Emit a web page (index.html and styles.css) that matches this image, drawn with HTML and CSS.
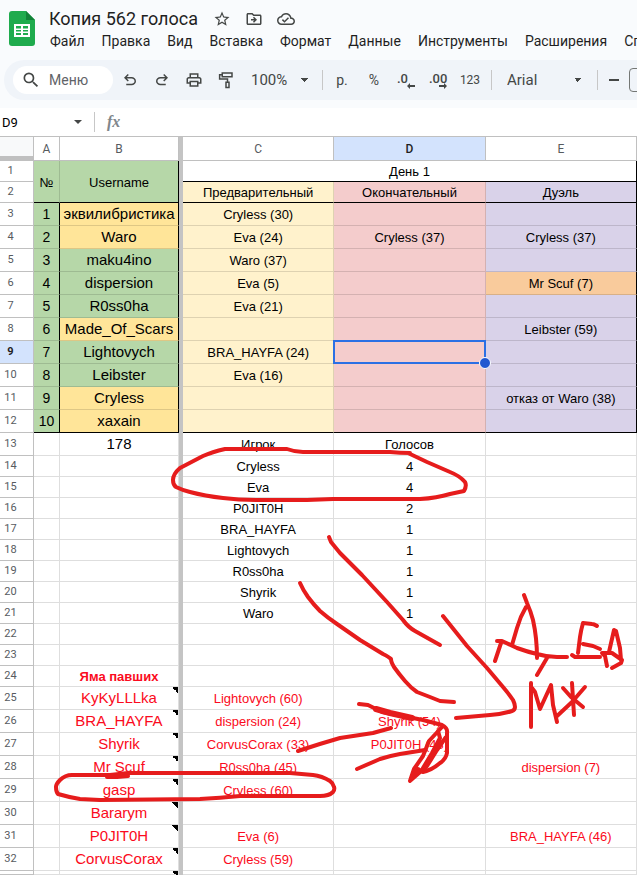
FILE: index.html
```html
<!DOCTYPE html>
<html lang="ru">
<head>
<meta charset="utf-8">
<meta name="viewport" content="width=device-width, initial-scale=1">
<title>Копия 562 голоса</title>
<link rel="stylesheet" href="styles.css">
</head>
<body>
<div class="app">
<header class="top">
  <div class="brand">
    <svg class="logo" viewBox="0 0 26 35" aria-hidden="true"><path fill="#1fab4d" d="M3 0h14l9 9v23a3 3 0 0 1-3 3H3a3 3 0 0 1-3-3V3a3 3 0 0 1 3-3z"/><path fill="#128238" d="M17 0l9 9h-9z"/><path fill="#fff" fill-rule="evenodd" d="M5 13h16v13H5zm2 2v2.500h5V15zm7 0v2.500h5V15zm-7 4v1.500h5V19zm7 0v1.500h5V19zm-7 3v2h5v-2zm7 0v2h5v-2z"/></svg>
    <div class="heading">
      <div class="title-row">
        <input class="doc-title" aria-label="Название документа" value="Копия 562 голоса">
        <button class="icon-btn" aria-label="Пометить"><svg viewBox="0 0 24 24"><path d="M22 9.240l-7.190-.620L12 2 9.190 8.630 2 9.240l5.460 4.730L5.820 21 12 17.270 18.180 21l-1.630-7.030L22 9.240zM12 15.400l-3.760 2.270 1-4.280-3.320-2.880 4.380-.380L12 6.100l1.710 4.040 4.380.380-3.320 2.880 1 4.280L12 15.400z"/></svg></button>
        <button class="icon-btn" aria-label="Переместить"><svg viewBox="0 0 24 24"><path d="M20 6h-8l-2-2H4c-1.100 0-2 .9-2 2v12c0 1.100.9 2 2 2h16c1.100 0 2-.9 2-2V8c0-1.100-.9-2-2-2zm0 12H4V6h5.170l2 2H20v10z"/><path d="M12 17l4-4-4-4-1.400 1.400 1.600 1.600H8v2h4.200l-1.600 1.600z"/></svg></button>
        <button class="icon-btn" aria-label="Состояние документа"><svg viewBox="0 0 24 24"><path d="M19.350 10.040C18.670 6.590 15.640 4 12 4 9.110 4 6.600 5.640 5.350 8.040 2.340 8.360 0 10.910 0 14c0 3.310 2.690 6 6 6h13c2.760 0 5-2.240 5-5 0-2.640-2.050-4.780-4.650-4.960zM19 18H6c-2.210 0-4-1.790-4-4 0-2.050 1.530-3.760 3.560-3.970l1.070-.110.500-.950C8.080 7.140 9.940 6 12 6c2.620 0 4.880 1.860 5.390 4.430l.300 1.500 1.530.110c1.560.100 2.780 1.410 2.780 2.960 0 1.650-1.350 3-3 3zm-9-3.820l-2.090-2.090L6.500 13.500 10 17l6.010-6.010-1.410-1.410z"/></svg></button>
      </div>
      <nav class="menu">
        <button>Файл</button><button>Правка</button><button>Вид</button><button>Вставка</button><button>Формат</button><button>Данные</button><button>Инструменты</button><button>Расширения</button><button>Справка</button>
      </nav>
    </div>
  </div>
  <div class="toolbar">
    <label class="search"><svg viewBox="0 0 24 24" aria-hidden="true"><path d="M15.500 14h-.790l-.280-.270A6.471 6.471 0 0 0 16 9.500 6.500 6.500 0 1 0 9.500 16c1.610 0 3.090-.590 4.230-1.570l.270.280v.790l5 4.990L20.490 19l-4.990-5zm-6 0C7.010 14 5 11.990 5 9.500S7.010 5 9.500 5 14 7.010 14 9.500 11.990 14 9.500 14z"/></svg><input type="text" aria-label="Поиск по меню" placeholder="Меню"></label>
    <div class="tools">
      <button class="tool" aria-label="Отменить"><svg viewBox="0 0 24 24"><path d="M7 19v-2h7.100q1.575 0 2.738-1T18 13.500 16.838 11 14.100 10H7.800l2.600 2.600L9 14 4 9l5-5 1.400 1.400L7.800 8h6.300q2.425 0 4.163 1.575T20 13.500t-1.738 3.925T14.100 19z"/></svg></button>
      <button class="tool" aria-label="Повторить"><svg viewBox="0 0 24 24"><path transform="matrix(-1 0 0 1 24 0)" d="M7 19v-2h7.100q1.575 0 2.738-1T18 13.500 16.838 11 14.100 10H7.800l2.600 2.600L9 14 4 9l5-5 1.400 1.400L7.800 8h6.300q2.425 0 4.163 1.575T20 13.500t-1.738 3.925T14.100 19z"/></svg></button>
      <button class="tool" aria-label="Печать"><svg viewBox="0 0 24 24"><path d="M19 8h-1V3H6v5H5c-1.660 0-3 1.340-3 3v6h4v4h12v-4h4v-6c0-1.660-1.340-3-3-3zM8 5h8v3H8V5zm8 12v2H8v-4h8v2zm2-2v-2H6v2H4v-4c0-.550.450-1 1-1h14c.550 0 1 .450 1 1v4h-2z"/></svg></button>
      <button class="tool" aria-label="Копировать форматирование"><svg viewBox="0 0 24 24"><path fill="none" stroke="#444746" stroke-width="2" d="M7 2.500h13v5H7zM7 5H3.500v5.500H14V15M12 15h4v7h-4z"/></svg></button>
    </div>
    <select class="zoom" aria-label="Масштаб"><option>100%</option></select>
    <span class="rule"></span>
    <div class="formats">
      <button>р.</button>
      <button>%</button>
      <button class="dec" aria-label="Уменьшить число знаков">.0<svg viewBox="0 0 8 6"><path d="M3 0v2h5v2H3v2L0 3z"/></svg></button>
      <button class="dec" aria-label="Увеличить число знаков">.00<svg viewBox="0 0 8 6"><path d="M5 0v2H0v2h5v2l3-3z"/></svg></button>
      <button class="small">123</button>
    </div>
    <span class="rule"></span>
    <select class="font" aria-label="Шрифт"><option>Arial</option></select>
    <span class="rule"></span>
    <button class="minus" aria-label="Уменьшить размер шрифта"></button>
    <input class="size" aria-label="Размер шрифта" value="">
  </div>
</header>
<div class="formula">
  <input class="name-box" aria-label="Поле имени" value="D9">
  <svg class="caret" viewBox="0 0 8 4" aria-hidden="true"><path d="M0 0h8L4 4z"/></svg>
  <span class="rule"></span>
  <label class="fx" for="fx">fx</label>
  <input class="fx-input" id="fx">
</div>
<table class="sheet">
  <colgroup><col class="c-head"><col class="c-a"><col class="c-b"><col class="c-freeze"><col><col><col></colgroup>
  <thead>
    <tr><th class="corner" aria-label="Выделить всё"></th><th>A</th><th>B</th><td class="freeze"></td><th>C</th><th class="sel">D</th><th>E</th></tr>
  </thead>
  <tbody class="votes">
    <tr class="short"><th>1</th><td class="g under" rowspan="2">№</td><td class="g edge under" rowspan="2">Username</td><td class="freeze" rowspan="12"></td><td class="under edge" colspan="3">День 1</td></tr>
    <tr class="short"><th>2</th><td class="y under">Предварительный</td><td class="r under">Окончательный</td><td class="p under edge">Дуэль</td></tr>
    <tr><th>3</th><td class="g num edge">1</td><td class="o name edge">эквилибристика</td><td class="y">Cryless (30)</td><td class="r"></td><td class="p edge"></td></tr>
    <tr><th>4</th><td class="g num edge">2</td><td class="o name edge">Waro</td><td class="y">Eva (24)</td><td class="r">Cryless (37)</td><td class="p edge">Cryless (37)</td></tr>
    <tr><th>5</th><td class="g num edge">3</td><td class="g name edge">maku4ino</td><td class="y">Waro (37)</td><td class="r"></td><td class="p edge"></td></tr>
    <tr><th>6</th><td class="g num edge">4</td><td class="g name edge">dispersion</td><td class="y">Eva (5)</td><td class="r"></td><td class="h edge">Mr Scuf (7)</td></tr>
    <tr><th>7</th><td class="g num edge">5</td><td class="g name edge">R0ss0ha</td><td class="y">Eva (21)</td><td class="r"></td><td class="p edge"></td></tr>
    <tr><th>8</th><td class="g num edge">6</td><td class="o name edge">Made_Of_Scars</td><td class="y"></td><td class="r"></td><td class="p edge">Leibster (59)</td></tr>
    <tr><th class="sel">9</th><td class="g num edge">7</td><td class="g name edge">Lightovych</td><td class="y">BRA_HAYFA (24)</td><td class="r active"></td><td class="p edge"></td></tr>
    <tr><th>10</th><td class="g num edge">8</td><td class="g name edge">Leibster</td><td class="y">Eva (16)</td><td class="r"></td><td class="p edge"></td></tr>
    <tr><th>11</th><td class="g num edge">9</td><td class="o name edge">Cryless</td><td class="y"></td><td class="r"></td><td class="p edge">отказ от Waro (38)</td></tr>
    <tr><th>12</th><td class="g num edge under">10</td><td class="o name edge under">xaxain</td><td class="y under"></td><td class="r under"></td><td class="p edge under"></td></tr>
  </tbody>
  <tbody class="totals">
    <tr><th>13</th><td></td><td class="name">178</td><td class="freeze" rowspan="11"></td><td>Игрок</td><td>Голосов</td><td></td></tr>
    <tr class="short"><th>14</th><td></td><td></td><td>Cryless</td><td>4</td><td></td></tr>
    <tr class="short"><th>15</th><td></td><td></td><td>Eva</td><td>4</td><td></td></tr>
    <tr class="short"><th>16</th><td></td><td></td><td>P0JIT0H</td><td>2</td><td></td></tr>
    <tr class="short"><th>17</th><td></td><td></td><td>BRA_HAYFA</td><td>1</td><td></td></tr>
    <tr class="short"><th>18</th><td></td><td></td><td>Lightovych</td><td>1</td><td></td></tr>
    <tr class="short"><th>19</th><td></td><td></td><td>R0ss0ha</td><td>1</td><td></td></tr>
    <tr class="short"><th>20</th><td></td><td></td><td>Shyrik</td><td>1</td><td></td></tr>
    <tr class="short"><th>21</th><td></td><td></td><td>Waro</td><td>1</td><td></td></tr>
    <tr class="short"><th>22</th><td></td><td></td><td></td><td></td><td></td></tr>
    <tr class="short"><th>23</th><td></td><td></td><td></td><td></td><td></td></tr>
  </tbody>
  <tbody class="fallen">
    <tr class="short"><th>24</th><td></td><td class="pit">Яма павших</td><td class="freeze" rowspan="10"></td><td></td><td></td><td></td></tr>
    <tr><th>25</th><td></td><td class="name note">KyKyLLLka</td><td>Lightovych (60)</td><td></td><td></td></tr>
    <tr><th>26</th><td></td><td class="name note">BRA_HAYFA</td><td>dispersion (24)</td><td>Shyrik (54)</td><td></td></tr>
    <tr><th>27</th><td></td><td class="name note">Shyrik</td><td>CorvusCorax (33)</td><td>P0JIT0H (43)</td><td></td></tr>
    <tr><th>28</th><td></td><td class="name note">Mr Scuf</td><td>R0ss0ha (45)</td><td></td><td>dispersion (7)</td></tr>
    <tr><th>29</th><td></td><td class="name note">gasp</td><td>Cryless (60)</td><td></td><td></td></tr>
    <tr><th>30</th><td></td><td class="name note">Bararym</td><td></td><td></td><td></td></tr>
    <tr><th>31</th><td></td><td class="name note">P0JIT0H</td><td>Eva (6)</td><td></td><td>BRA_HAYFA (46)</td></tr>
    <tr><th>32</th><td></td><td class="name note">CorvusCorax</td><td>Cryless (59)</td><td></td><td></td></tr>
    <tr class="cut"><th></th><td></td><td class="note"></td><td></td><td></td><td></td></tr>
  </tbody>
</table>
<svg class="ink" viewBox="0 0 637 875" aria-hidden="true">
  <!-- loop round the two leaders -->
  <path d="M410 453Q400 453 390 452L303 452Q295 452 287 449L225 449Q212 452 203 456L180 468Q173 474 173 480Q173 485 176 487Q182 490 190 492Q205 496 223 498Q240 500 260 500L307 500L333 499H420Q437 498 450 494L464 491Q467 486 465 482Q460 476 450 472L427 462L408 453"/>
  <!-- long strokes -->
  <path d="M329 537L331 542L340 553L362 575L387 602L403 620Q408 627 415 631L440 645"/>
  <path d="M300 583Q303 590 308 597Q314 605 320 611Q328 618 337 624L360 640L383 654Q389 657 391 659Q391 662 394 667Q399 674 405 681Q411 688 417 692L430 697L440 701L454 702"/>
  <path d="M443 616L467 646L487 668L503 687Q509 694 513 700Q515 704 515 707Q515 710 512 711Q502 714 490 715L456 718"/>
  <!-- upper letters -->
  <path d="M524 595L527 603Q531 612 533 620Q537 638 537 658M526 607Q520 617 517 628L512 645M497 641H502L517 648Q528 652 537 654Q547 657 557 657H567M501 643L495 661M547 658L537 675"/>
  <path d="M597 626Q594 624 592 624L583 623Q581 630 580 637L578 653M583 644L593 646L600 649M572 655L575 657H600M602 653L605 656L607 666M602 653L612 653L622 660L621 663L612 668M609 652L614 630L616 631L620 648L621 660"/>
  <!-- lower letters -->
  <path d="M531 727V683M532 688L535 692L540 709L551 685L553 705L557 722M572 683L574 715M556 717L572 702L585 687M563 688L571 697L583 707"/>
  <!-- arrow and its head -->
  <path d="M359 704L368 705L382 712L423 720L442 725Q448 728 447 733V753Q446 759 440 763Q432 770 423 772L418 769L410 781L414 769L423 756L429 741L442 727M446 737L437 750L427 766L411 780M438 731L440 738L432 753L423 768"/>
  <path class="bold" d="M376 709L390 713L412 718"/>
  <path d="M298 751Q319 744 340 738L373 733L391 728M357 769L380 759Q389 756 400 754L425 750"/>
  <!-- loop round row 29 -->
  <path d="M107 777H117L128 776M128 773L110 775H72Q65 775 60 780Q56 784 56 787Q56 792 58 794Q68 797 80 799L100 800L200 799Q220 798 240 796H320Q329 796 333 792Q335 789 334 787Q333 783 330 781Q322 776 313 775L290 773H128"/>
</svg>
</div>
</body>
</html>
```
FILE: styles.css
```css
* { box-sizing: border-box; }

body {
  margin: 0;
  background: #fff;
  color: #000;
  font-family: Roboto, "Liberation Sans", sans-serif;
}

.app { position: relative; overflow: hidden; }

button, input, select {
  margin: 0;
  padding: 0;
  border: 0;
  background: none;
  color: inherit;
  font: inherit;
  outline: 0;
}

svg { display: block; fill: #444746; }

.top { background: #f9fbfd; padding: 8px 0; }

.brand { display: flex; gap: 14px; padding-left: 9px; }
.logo { width: 26px; height: 35px; margin-top: 3px; flex: none; }

.heading { white-space: nowrap; }
.title-row { display: flex; align-items: center; height: 22px; gap: 14px; }
.doc-title { width: 150px; padding-bottom: 2px; font-size: 18px; color: #1f1f1f; }
.icon-btn svg { width: 18px; height: 18px; }

.menu { display: flex; gap: 17px; height: 22px; padding-left: 1px; font-size: 14px; color: #1f1f1f; }

.toolbar {
  display: flex;
  align-items: center;
  height: 40px;
  margin: 8px 0 0 4px;
  padding-left: 9px;
  border-radius: 20px 0 0 20px;
  background: #f0f4f9;
  color: #444746;
  white-space: nowrap;
  font-size: 14px;
}
.toolbar > * { flex: none; }

.search {
  display: flex;
  align-items: center;
  gap: 8px;
  width: 100px;
  height: 28px;
  padding-left: 8px;
  border-radius: 14px;
  background: #fff;
}
.search svg { width: 20px; height: 20px; flex: none; }
.search input { width: 50px; }
.search input::placeholder { color: #5f6368; opacity: 1; }

.tools { display: flex; gap: 14px; margin-left: 8px; }
.tool svg { width: 18px; height: 18px; }

.zoom, .font {
  appearance: none;
  background: linear-gradient(to bottom left, #444746 50%, transparent 50%) no-repeat right 4px center / 4px 4px,
    linear-gradient(to bottom right, #444746 50%, transparent 50%) no-repeat right center / 4px 4px;
}
.zoom { width: 58px; margin: 0 13px 0 16px; font-size: 15px; }
.font { width: 75px; margin: 0 15px; font-size: 15px; }

.rule { width: 1px; height: 20px; background: #c7c7c7; }

.formats { display: grid; grid-template-columns: repeat(5, 32px); margin: 0 5px 0 3px; }
.formats button { height: 24px; }
.formats .small { font-size: 12px; }
.formats .dec { position: relative; font-size: 13px; font-weight: 500; text-align: left; padding: 0 0 4px 7px; }
.dec svg { position: absolute; right: 7px; bottom: 3px; width: 8px; height: 6px; }

.minus { width: 10px; height: 2px; margin: 0 10px 0 11px; background: #444746; }
.size { width: 36px; height: 24px; border: 1px solid #747775; border-radius: 4px; }

.formula {
  display: flex;
  align-items: center;
  height: 29px;
  padding-left: 2px;
  border-bottom: 1px solid #c0c0c0;
  font-size: 13px;
}
.name-box { width: 72px; }
.caret { width: 8px; height: 4px; }
.formula .rule { margin: 0 12px; }
.fx { color: #80868b; font: italic 700 16px "Liberation Serif", serif; }
.fx-input { flex: 1; margin-left: 8px; }

.sheet {
  width: 100%;
  table-layout: fixed;
  border-collapse: separate;
  border-spacing: 0;
  font-family: "Liberation Sans", Arial, sans-serif;
  font-size: 13px;
  line-height: 16px;
}
.c-head { width: 34px; }
.c-a { width: 26px; }
.c-b { width: 119px; }
.c-freeze { width: 4px; }

.sheet td, .sheet th {
  height: 23px;
  padding: 2px 0 0;
  border: 0 solid rgba(0, 0, 0, .13);
  border-width: 0 1px 1px 0;
  text-align: center;
  white-space: nowrap;
}
.sheet th {
  padding: 0;
  border-color: #c0c0c0;
  color: #575b5f;
  font-family: Roboto, sans-serif;
  font-size: 11px;
  font-weight: 400;
}
.sheet thead th { height: 24px; font-size: 12px; }
.sheet tbody th { padding-right: 12px; }
.sheet .short td, .sheet .short th { height: 21px; }
.sheet .cut td, .sheet .cut th { height: 4px; padding: 0; line-height: 0; }
.sheet th.corner { background: #f8f9fa; border-bottom: 5px solid #c0c0c0; }
.sheet .sel { background: #d3e3fd; color: #1f1f1f; font-weight: 500; }
.sheet tbody .sel { font-weight: 700; }
.sheet td.freeze { height: auto; padding: 0; border: 0; background: #c4c4c4; }

.sheet .name { padding: 0; font-size: 15px; }
.sheet .num { padding: 0; font-size: 14px; }
.sheet .g { background: #b6d7a8; }
.sheet .o { background: #ffe599; }
.sheet .y { background: #fff2cc; }
.sheet .r { background: #f4cccc; }
.sheet .p { background: #d9d2e9; }
.sheet .h { background: #f9cb9c; }
.sheet .edge { border-right-color: #000; }
.sheet .under { border-bottom-color: #000; }

.sheet .active { position: relative; }
.active::before {
  content: "";
  position: absolute;
  inset: -1px;
  border: 2px solid #2b70e4;
}
.active::after {
  content: "";
  position: absolute;
  right: -6px;
  bottom: -6px;
  width: 10px;
  height: 10px;
  border: 1px solid #fff;
  border-radius: 50%;
  background: #1f57d0;
}

.fallen td { color: #fb0a20; }
.fallen .pit { font-weight: 700; }
.fallen .note {
  background: linear-gradient(to top right, transparent 50%, #000 50%) no-repeat right top / 6px 6px;
}

.ink {
  position: absolute;
  top: 0;
  left: 0;
  width: 637px;
  height: 875px;
  fill: none;
  stroke: #e61c1c;
  stroke-width: 4;
  stroke-linecap: round;
  stroke-linejoin: round;
  pointer-events: none;
}
.ink .bold { stroke-width: 6; }
```
